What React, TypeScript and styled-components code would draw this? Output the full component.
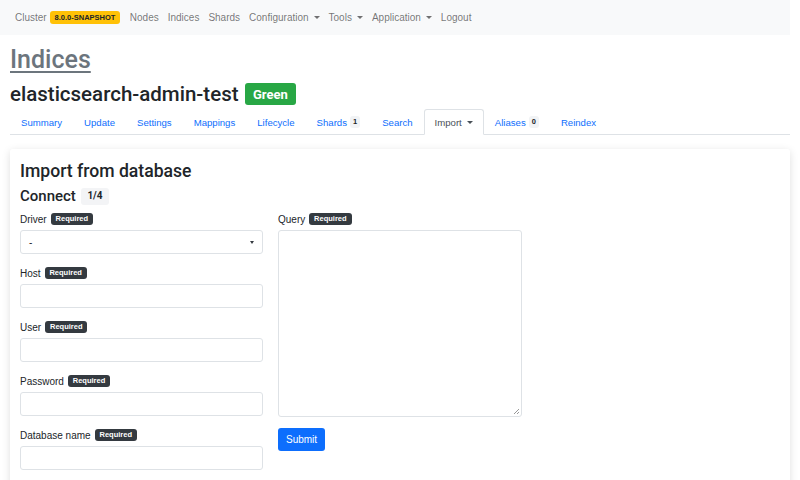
import styled, { createGlobalStyle } from 'styled-components'

const GlobalStyle = createGlobalStyle`
  html, body {
    margin: 0;
    padding: 0;
    background: #fff;
  }
  body {
    font-family: "Liberation Sans", Arial, sans-serif;
    color: #212529;
  }
  * {
    box-sizing: border-box;
  }
`

const headingFont = `Roboto, "Liberation Sans", Arial, sans-serif`

const Page = styled.div`
  width: 790px;
`

const Navbar = styled.nav`
  display: flex;
  align-items: center;
  height: 35px;
  padding-left: 15px;
  background: #f8f9fa;
  font-size: 10px;
  color: rgba(0, 0, 0, 0.55);
`

const Brand = styled.span`
  display: flex;
  align-items: center;
  gap: 3px;
  margin-right: 5px;
`

const NavLink = styled.span`
  display: flex;
  align-items: center;
  gap: 3px;
  padding: 0 4.5px;
`

const Caret = styled.span`
  display: inline-block;
  width: 0;
  height: 0;
  border-left: 3px solid transparent;
  border-right: 3px solid transparent;
  border-top: 3.5px solid currentColor;
  margin-left: 2px;
`

const Badge = styled.span<{ $bg: string; $color: string; $size: number; $padX?: number }>`
  display: inline-block;
  background: ${(p) => p.$bg};
  color: ${(p) => p.$color};
  font-size: ${(p) => p.$size}px;
  font-weight: 700;
  line-height: 1;
  padding: ${(p) => p.$size * 0.35}px ${(p) => p.$padX ?? p.$size * 0.65}px;
  border-radius: 3px;
  white-space: nowrap;
`

const Main = styled.main`
  padding: 0 0 0 10px;
`

const Title = styled.a`
  display: block;
  margin-top: 10px;
  font-family: ${headingFont};
  font-size: 25px;
  line-height: 30px;
  font-weight: 500;
  color: #6c757d;
  text-decoration: underline;
  text-underline-offset: 3px;
  text-decoration-thickness: 2px;
`

const IndexName = styled.h2`
  display: flex;
  align-items: center;
  gap: 6px;
  margin: 6px 0 0;
  font-family: ${headingFont};
  font-size: 20.5px;
  line-height: 26px;
  font-weight: 500;
  color: #212529;
`

const Tabs = styled.ul`
  display: flex;
  list-style: none;
  margin: 2px 0 0;
  padding: 0;
  border-bottom: 1px solid #dee2e6;
`

const Tab = styled.li<{ $active?: boolean }>`
  display: flex;
  align-items: center;
  gap: 3px;
  height: 26px;
  padding: 0 10px;
  margin-bottom: -1px;
  font-size: 9.6px;
  color: ${(p) => (p.$active ? '#495057' : '#0d6efd')};
  background: ${(p) => (p.$active ? '#fff' : 'transparent')};
  border: 1px solid ${(p) => (p.$active ? '#dee2e6' : 'transparent')};
  border-bottom-color: ${(p) => (p.$active ? '#fff' : 'transparent')};
  border-radius: 3px 3px 0 0;
`

const Card = styled.section`
  margin-top: 14px;
  padding: 11px 10px 20px;
  background: #fff;
  box-shadow: 0 2px 8px rgba(0, 0, 0, 0.13);
  border-radius: 3px;
`

const CardTitle = styled.h3`
  margin: 0;
  font-family: ${headingFont};
  font-size: 17.6px;
  line-height: 22px;
  font-weight: 500;
`

const Step = styled.h4`
  display: flex;
  align-items: center;
  gap: 5px;
  margin: 4px 0 0;
  font-family: ${headingFont};
  font-size: 15px;
  line-height: 20px;
  font-weight: 500;
`

const FormGrid = styled.div`
  display: grid;
  grid-template-columns: 243px 244px;
  column-gap: 15px;
  margin-top: 6px;
`

const Column = styled.div`
  display: flex;
  flex-direction: column;
`

const Field = styled.div`
  display: flex;
  flex-direction: column;
  gap: 4px;
  margin-bottom: 12px;
`

const Label = styled.label`
  display: flex;
  align-items: center;
  gap: 4px;
  height: 14px;
  font-size: 10px;
`

const Input = styled.div`
  height: 24px;
  border: 1px solid #dee2e6;
  border-radius: 3px;
  background: #fff;
`

const Select = styled(Input)`
  display: flex;
  align-items: center;
  justify-content: space-between;
  padding: 0 8px;
  font-size: 10px;
  color: #212529;
`

const SelectCaret = styled.span`
  width: 0;
  height: 0;
  border-left: 2.5px solid transparent;
  border-right: 2.5px solid transparent;
  border-top: 3px solid #343a40;
`

const TextArea = styled.div`
  position: relative;
  height: 187px;
  border: 1px solid #dee2e6;
  border-radius: 3px;
`

const Grip = styled.svg`
  position: absolute;
  right: 1px;
  bottom: 1px;
`

const SubmitButton = styled.button`
  align-self: flex-start;
  margin-top: -1px;
  height: 23px;
  padding: 0 8px;
  border: none;
  border-radius: 3px;
  background: #0d6efd;
  color: #fff;
  font-family: inherit;
  font-size: 10px;
`

const Required = () => (
  <Badge $bg="#343a40" $color="#fff" $size={7.5}>
    Required
  </Badge>
)

const leftFields = ['Host', 'User', 'Password', 'Database name']

const tabs: { label: string; count?: string; active?: boolean; caret?: boolean }[] = [
  { label: 'Summary' },
  { label: 'Update' },
  { label: 'Settings' },
  { label: 'Mappings' },
  { label: 'Lifecycle' },
  { label: 'Shards', count: '1' },
  { label: 'Search' },
  { label: 'Import', active: true, caret: true },
  { label: 'Aliases', count: '0' },
  { label: 'Reindex' },
]

export default function App() {
  return (
    <Page>
      <GlobalStyle />
      <Navbar>
        <Brand>
          Cluster
          <Badge $bg="#ffc107" $color="#212529" $size={7.5}>
            8.0.0-SNAPSHOT
          </Badge>
        </Brand>
        <NavLink>Nodes</NavLink>
        <NavLink>Indices</NavLink>
        <NavLink>Shards</NavLink>
        <NavLink>
          Configuration <Caret />
        </NavLink>
        <NavLink>
          Tools <Caret />
        </NavLink>
        <NavLink>
          Application <Caret />
        </NavLink>
        <NavLink>Logout</NavLink>
      </Navbar>
      <Main>
        <Title>Indices</Title>
        <IndexName>
          elasticsearch-admin-test
          <Badge $bg="#28a745" $color="#fff" $size={13}>
            Green
          </Badge>
        </IndexName>
        <Tabs>
          {tabs.map((t) => (
            <Tab key={t.label} $active={t.active}>
              {t.label}
              {t.count && (
                <Badge $bg="#f1f3f5" $color="#212529" $size={7.5} $padX={3}>
                  {t.count}
                </Badge>
              )}
              {t.caret && <Caret />}
            </Tab>
          ))}
        </Tabs>
        <Card>
          <CardTitle>Import from database</CardTitle>
          <Step>
            Connect
            <Badge $bg="#f3f4f6" $color="#212529" $size={10}>
              1/4
            </Badge>
          </Step>
          <FormGrid>
            <Column>
              <Field>
                <Label>
                  Driver <Required />
                </Label>
                <Select>
                  -
                  <SelectCaret />
                </Select>
              </Field>
              {leftFields.map((f) => (
                <Field key={f}>
                  <Label>
                    {f} <Required />
                  </Label>
                  <Input />
                </Field>
              ))}
            </Column>
            <Column>
              <Field>
                <Label>
                  Query <Required />
                </Label>
                <TextArea>
                  <Grip width="7" height="7" viewBox="0 0 7 7">
                    <path d="M6 1 L1 6 M6 4 L4 6" stroke="#999" strokeWidth="1" />
                  </Grip>
                </TextArea>
              </Field>
              <SubmitButton>Submit</SubmitButton>
            </Column>
          </FormGrid>
        </Card>
      </Main>
    </Page>
  )
}
